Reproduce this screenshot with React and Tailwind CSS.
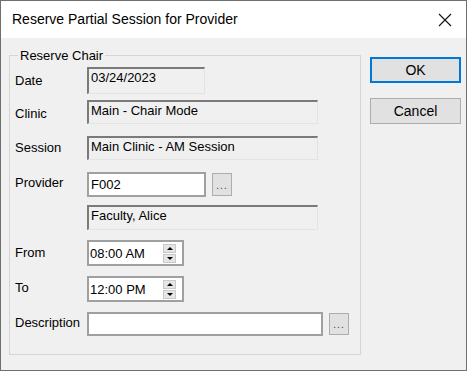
import React from "react";

const FONT = { fontFamily: '"Liberation Sans", Arial, sans-serif' };

function ReadOnlyBox({ text, w, h }) {
  return (
    <div
      className={`${w} ${h} box-border bg-[#f0f0f0] border-t-2 border-l-2 border-b border-r border-t-[#7a7a7a] border-l-[#7a7a7a] border-b-[#e3e3e3] border-r-[#e3e3e3] pl-[2px] pt-[1px] text-[13px] leading-[16px] text-black`}
    >
      {text}
    </div>
  );
}

function DotsButton({ cls }) {
  return (
    <div
      className={`${cls} box-border bg-[#e1e1e1] border border-[#adadad] flex items-end justify-center pb-[5px] text-[10px] leading-[8px] text-[#3b3270] tracking-[1px]`}
    >
      ...
    </div>
  );
}

function Spin({ down }) {
  return (
    <div className="w-[13px] h-[9px] bg-[#e5e5e5] border border-[#c9c9c9] flex items-center justify-center">
      {down ? (
        <div className="w-0 h-0 border-l-[3px] border-r-[3px] border-t-[3px] border-l-transparent border-r-transparent border-t-black" />
      ) : (
        <div className="w-0 h-0 border-l-[3px] border-r-[3px] border-b-[3px] border-l-transparent border-r-transparent border-b-black" />
      )}
    </div>
  );
}

function TimeBox({ value }) {
  return (
    <div className="w-[97px] h-[26px] box-border bg-white border-2 border-[#a0a0a0] flex items-center justify-between pl-[1px] pr-[6px]">
      <span className="text-[13px] leading-none">{value}</span>
      <div className="flex flex-col gap-px">
        <Spin />
        <Spin down />
      </div>
    </div>
  );
}

function Row({ label, top, labelTop, children }) {
  return (
    <div className={`flex ${top}`}>
      <div className={`w-[77px] shrink-0 pl-[5px] text-[13px] leading-[15px] ${labelTop}`}>{label}</div>
      {children}
    </div>
  );
}

export default function App() {
  return (
    <div
      style={FONT}
      className="w-[467px] h-[371px] box-border border border-[#6f6f6f] bg-[#f0f0f0] flex flex-col text-black"
    >
      <div className="h-[37px] shrink-0 bg-white flex items-center justify-between pl-[11px] pr-[14px]">
        <span className="text-[14px]">Reserve Partial Session for Provider</span>
        <svg width="14" height="14" viewBox="0 0 14 14">
          <path d="M1 1 L13 13 M13 1 L1 13" stroke="#111" strokeWidth="1.1" />
        </svg>
      </div>

      <div className="flex pl-[8px] pt-[17px]">
        <div className="relative w-[352px] h-[300px] box-border border border-[#d5d5d5]">
          <span className="absolute -top-[7px] left-[8px] px-[2px] bg-[#f0f0f0] text-[13px] leading-[14px]">
            Reserve Chair
          </span>

          <div className="flex flex-col">
            <Row label="Date" top="mt-[11px]" labelTop="pt-[6px]">
              <ReadOnlyBox text="03/24/2023" w="w-[118px]" h="h-[27px]" />
            </Row>
            <Row label="Clinic" top="mt-[6px]" labelTop="pt-[6px]">
              <ReadOnlyBox text="Main - Chair Mode" w="w-[231px]" h="h-[24px]" />
            </Row>
            <Row label="Session" top="mt-[12px]" labelTop="pt-[4px]">
              <ReadOnlyBox text="Main Clinic - AM Session" w="w-[231px]" h="h-[24px]" />
            </Row>
            <Row label="Provider" top="mt-[12px]" labelTop="pt-[3px]">
              <div className="flex gap-[6px]">
                <div className="w-[119px] h-[25px] box-border bg-white border-2 border-[#a0a0a0] pl-[2px] flex items-center text-[13px]">
                  F002
                </div>
                <DotsButton cls="w-[20px] h-[23px] mt-px" />
              </div>
            </Row>
            <Row label="" top="mt-[8px]" labelTop="">
              <ReadOnlyBox text="Faculty, Alice" w="w-[231px]" h="h-[25px]" />
            </Row>
            <Row label="From" top="mt-[10px]" labelTop="pt-[5px]">
              <TimeBox value="08:00 AM" />
            </Row>
            <Row label="To" top="mt-[10px]" labelTop="pt-[4px]">
              <TimeBox value="12:00 PM" />
            </Row>
            <Row label="Description" top="mt-[10px]" labelTop="pt-[3px]">
              <div className="flex gap-[6px]">
                <div className="w-[236px] h-[24px] box-border bg-white border-2 border-[#a0a0a0]" />
                <DotsButton cls="w-[20px] h-[22px] mt-px" />
              </div>
            </Row>
          </div>
        </div>

        <div className="ml-[9px] flex flex-col pt-[2px]">
          <button className="w-[91px] h-[26px] box-border bg-[#e1e1e1] border-2 border-[#0078d7] text-[14px] leading-none">
            OK
          </button>
          <button className="mt-[15px] w-[91px] h-[26px] box-border bg-[#e1e1e1] border border-[#adadad] text-[14px] leading-none">
            Cancel
          </button>
        </div>
      </div>
    </div>
  );
}
